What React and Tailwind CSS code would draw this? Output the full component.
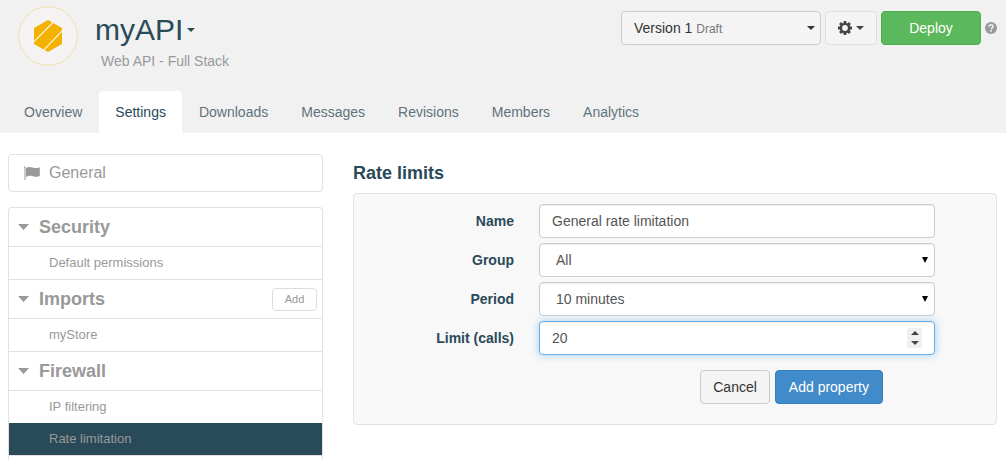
import { useState } from "react";

const tabs = ["Overview", "Settings", "Downloads", "Messages", "Revisions", "Members", "Analytics"];

const sections = [
  { title: "Security", items: ["Default permissions"] },
  { title: "Imports", items: ["myStore"], action: "Add" },
  { title: "Firewall", items: ["IP filtering", "Rate limitation"] },
];

function Logo() {
  return (
    <svg viewBox="0 0 60 60" className="size-[60px] shrink-0" aria-hidden="true">
      <circle cx="30" cy="30" r="29.4" fill="#f4f3f1" stroke="#f3dfa8" strokeWidth="1" />
      <path d="M30 14 44 22v16L30 46 16 38V22Z" fill="#f3b200" />
      <path d="M16 35.600 35 16.500M25.500 44.300 44 25" stroke="#fff6dc" strokeWidth="1.1" />
    </svg>
  );
}

function Caret({ className = "" }) {
  return (
    <svg viewBox="0 0 8 4" className={`h-1 w-2 shrink-0 ${className}`} aria-hidden="true">
      <path d="M0 0h8L4 4Z" fill="currentColor" />
    </svg>
  );
}

function Disclosure() {
  return (
    <svg viewBox="0 0 12 6" className="h-1.5 w-3 shrink-0" aria-hidden="true">
      <path d="M0 0h11L5.5 6Z" fill="currentColor" />
    </svg>
  );
}

function Gear() {
  return (
    <svg viewBox="0 0 14 14" className="size-3.5" aria-hidden="true">
      <g stroke="currentColor" fill="none">
        <circle cx="7" cy="7" r="4.1" strokeWidth="2.4" />
        <path
          d="M7 0v2.6M7 11.4V14M0 7h2.6M11.4 7H14M2.05 2.05l1.9 1.9M10.05 10.05l1.9 1.9M2.05 11.95l1.9-1.9M10.05 3.95l1.9-1.9"
          strokeWidth="2.8"
        />
      </g>
    </svg>
  );
}

function Help() {
  return (
    <svg viewBox="0 0 12 12" className="size-3" aria-hidden="true">
      <circle cx="6" cy="6" r="6" fill="#999" />
      <path d="M4 4.8C4 3.4 4.8 2.8 6 2.8s2 .7 2 1.7c0 1.3-1.9 1.3-1.9 2.7" fill="none" stroke="#f1f1f1" strokeWidth="1.6" />
      <path d="M5.3 8.1h1.6v1.6H5.3Z" fill="#f1f1f1" />
    </svg>
  );
}

function Flag() {
  return (
    <svg viewBox="0 0 16 14" className="h-3.5 w-4" fill="currentColor" aria-hidden="true">
      <path d="M0 .8a.8.8 0 0 1 1.5 0V14H.5V1.8A1 1 0 0 1 0 .8Z" />
      <path d="M2 2.2C4 .6 6.500 .8 8.500 1.500S12.500 2.400 15.800 1.200V10C13 11.200 11 10.800 9 10.200S4.500 9.400 2 11Z" />
    </svg>
  );
}

const field =
  "h-[34px] w-full rounded border border-[#ccc] bg-white px-3 text-sm text-[#555] shadow-[inset_0_1px_1px_rgba(0,0,0,0.075)] outline-none";

function Row({ id, label, children }) {
  return (
    <div className="grid grid-cols-[185fr_396fr_61fr] items-center">
      <label htmlFor={id} className="pr-[25px] text-right text-sm font-bold text-[#294a59]">
        {label}
      </label>
      <div className="relative">{children}</div>
    </div>
  );
}

function Select({ id, value, onChange, options }) {
  return (
    <>
      <select id={id} value={value} onChange={onChange} className={`${field} appearance-none pl-4`}>
        {options.map((o) => (
          <option key={o}>{o}</option>
        ))}
      </select>
      <svg viewBox="0 0 6 6" className="pointer-events-none absolute top-3.5 right-[7px] size-1.5 text-black" aria-hidden="true">
        <path d="M0 0h6L3 6Z" fill="currentColor" />
      </svg>
    </>
  );
}

function Header() {
  return (
    <header className="bg-[#f1f1f1]">
      <div className="flex items-start pt-1.5 pr-[9px] pl-[18px]">
        <Logo />
        <div className="ml-[17px] flex-1">
          <h1>
            <button type="button" className="flex h-[47px] items-center gap-1 text-3xl text-[#294a59]">
              myAPI
              <Caret />
            </button>
          </h1>
          <p className="ml-1.5 text-sm leading-4 text-[#999]">Web API - Full Stack</p>
        </div>
        <div className="flex items-center gap-1 pt-[5px]">
          <button
            type="button"
            className="flex h-[34px] w-[200px] items-center rounded border border-[#ccc] bg-[#f4f4f4] pr-[5px] pl-3 text-sm text-[#333]"
          >
            <span className="flex-1 text-left">
              Version 1 <small className="text-xs text-[#777]">Draft</small>
            </span>
            <Caret />
          </button>
          <button
            type="button"
            aria-label="Options"
            className="flex h-[34px] w-[52px] items-center justify-center gap-1 rounded border border-[#ddd] bg-[#f4f4f4] text-[#444]"
          >
            <Gear />
            <Caret />
          </button>
          <button type="button" className="h-[34px] w-[100px] rounded border border-[#4cae4c] bg-[#5cb85c] text-sm text-white">
            Deploy
          </button>
          <button type="button" aria-label="Help">
            <Help />
          </button>
        </div>
      </div>
      <nav className="mt-[22px] flex gap-px pl-2">
        {tabs.map((t) => (
          <a
            key={t}
            href={`#${t.toLowerCase()}`}
            aria-current={t === "Settings" ? "page" : undefined}
            className={`rounded-t px-4 py-[11px] text-sm leading-5 ${t === "Settings" ? "bg-white text-[#294a59]" : "text-[#61737b]"}`}
          >
            {t}
          </a>
        ))}
      </nav>
    </header>
  );
}

function Sidebar() {
  return (
    <aside className="w-[315px] shrink-0 text-[#999]">
      <a href="#general" className="flex h-[38px] items-center gap-[9px] rounded border border-[#e1e1e1] px-[15px] text-base">
        <Flag />
        General
      </a>
      <div className="mt-[15px] rounded-t border border-b-0 border-[#e1e1e1] pb-1">
        {sections.map((s) => (
          <section key={s.title}>
            <div className="flex h-[39px] items-center border-b border-[#e1e1e1] pr-[5px] pl-[9px]">
              <button type="button" className="flex flex-1 items-center gap-[9px] text-left text-lg font-bold">
                <Disclosure />
                {s.title}
              </button>
              {s.action && (
                <button type="button" className="h-[23px] w-[45px] rounded border border-[#ddd] text-[11px]">
                  {s.action}
                </button>
              )}
            </div>
            <ul className="border-b border-[#e1e1e1]">
              {s.items.map((i) => (
                <li key={i}>
                  <a
                    href={`#${i.toLowerCase().replace(" ", "-")}`}
                    className={`flex h-8 items-center pl-10 text-[13px] ${i === "Rate limitation" ? "bg-[#294a59]" : ""}`}
                  >
                    {i}
                  </a>
                </li>
              ))}
            </ul>
          </section>
        ))}
      </div>
    </aside>
  );
}

function RateForm() {
  const [name, setName] = useState("General rate limitation");
  const [group, setGroup] = useState("All");
  const [period, setPeriod] = useState("10 minutes");
  const [limit, setLimit] = useState(20);

  return (
    <main className="flex-1">
      <h2 className="mt-[7px] text-lg leading-6 font-bold text-[#294a59]">Rate limits</h2>
      <form
        onSubmit={(e) => e.preventDefault()}
        className="mt-2 flex flex-col gap-[5px] rounded border border-[#e2e2e2] bg-[#f8f8f8] pt-2.5 pb-5"
      >
        <Row id="name" label="Name">
          <input id="name" className={field} value={name} onChange={(e) => setName(e.target.value)} />
        </Row>
        <Row id="group" label="Group">
          <Select id="group" value={group} onChange={(e) => setGroup(e.target.value)} options={["All"]} />
        </Row>
        <Row id="period" label="Period">
          <Select id="period" value={period} onChange={(e) => setPeriod(e.target.value)} options={["10 minutes", "1 hour"]} />
        </Row>
        <Row id="limit" label="Limit (calls)">
          <input
            id="limit"
            type="number"
            value={limit}
            onChange={(e) => setLimit(Number(e.target.value))}
            className="h-[34px] w-full appearance-none rounded border border-[#66afe9] bg-white px-3 text-sm text-[#555] shadow-[inset_0_1px_1px_rgba(0,0,0,0.075),0_0_8px_rgba(102,175,233,0.6)] outline-none [&::-webkit-inner-spin-button]:appearance-none"
          />
          <div className="absolute top-[7px] right-[13px] flex w-[15px] flex-col items-center bg-[#f0f0f0] text-[#444]">
            <button type="button" aria-label="Increase" className="flex h-2.5 items-center" onClick={() => setLimit(limit + 1)}>
              <Caret className="rotate-180" />
            </button>
            <button type="button" aria-label="Decrease" className="flex h-2.5 items-center" onClick={() => setLimit(limit - 1)}>
              <Caret />
            </button>
          </div>
        </Row>
        <div className="mt-2.5 flex justify-end gap-[5px] pr-[113px]">
          <button type="button" className="h-[34px] rounded border border-[#ccc] bg-[#f4f4f4] px-3 text-sm text-[#333]">
            Cancel
          </button>
          <button type="submit" className="h-[34px] rounded border border-[#357ebd] bg-[#428bca] px-[13px] text-sm text-white">
            Add property
          </button>
        </div>
      </form>
    </main>
  );
}

export default function App() {
  return (
    <div className="min-h-screen bg-white font-['Liberation_Sans',Arial,sans-serif]">
      <Header />
      <div className="flex items-start gap-[30px] pt-[21px] pr-[9px] pl-2">
        <Sidebar />
        <RateForm />
      </div>
    </div>
  );
}
